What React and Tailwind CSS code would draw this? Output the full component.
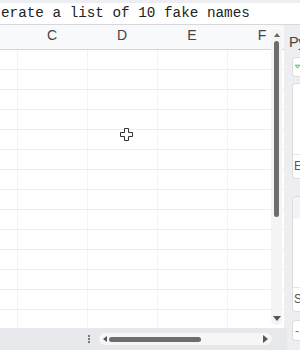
import React from "react";

const rows = Array.from({ length: 14 }, (_, i) => i);
const cols = ["C", "D", "E", "F"];

function Cursor() {
  return (
    <svg className="absolute left-[120px] top-[128px]" width="13" height="13" viewBox="0 0 13 13">
      <path
        d="M4.5 0.5h4v4h4v4h-4v4h-4v-4h-4v-4h4z"
        fill="#fff"
        stroke="#333"
        strokeWidth="1"
      />
    </svg>
  );
}

export default function App() {
  return (
    <div className="relative h-[350px] w-[300px] overflow-hidden bg-[#eceef1] font-['Liberation_Sans',Arial,sans-serif]">
      <div className="h-[3px] bg-[#eceef1]" />
      <div className="flex h-[22px] items-center border-b border-[#d6d8db] bg-white pl-[1px] font-['Liberation_Mono',monospace] text-[14.3px] leading-none text-[#222]">
        erate a list of 10 fake names
      </div>

      <div className="flex">
        <div className="relative h-[303px] w-[284px] shrink-0 overflow-hidden">
          <div className="flex h-[25px] items-end border-b border-[#d4d4d4] bg-[#f8f9fa] pb-[3px] text-[14px] text-[#444]">
            <div className="w-[17px] shrink-0" />
            {cols.map((c) => (
              <div key={c} className="w-[70px] shrink-0 text-center">
                {c}
              </div>
            ))}
          </div>
          <div className="bg-white">
            {rows.map((r) => (
              <div key={r} className="flex h-[20px] border-b border-[#ececec]">
                <div className="w-[17px] shrink-0" />
                {cols.map((c) => (
                  <div key={c} className="w-[70px] shrink-0 border-l border-[#f3f3f3]" />
                ))}
              </div>
            ))}
          </div>

          <div className="absolute right-[2px] top-[4px] flex h-[296px] w-[11px] flex-col items-center rounded-[5px] bg-[#f4f4f4] py-[4px]">
            <div className="h-0 w-0 border-x-[3px] border-b-[4px] border-x-transparent border-b-[#666]" />
            <div className="mt-[4px] h-[176px] w-[5px] rounded-full bg-[#6d6d6d]" />
            <div className="flex-1" />
            <div className="h-0 w-0 border-x-[4px] border-t-[5px] border-x-transparent border-t-[#555]" />
          </div>
        </div>

        <div className="ml-[3px] min-w-0 flex-1 overflow-hidden">
          <div className="pl-[2px] pt-[10px] text-[14.5px] leading-none tracking-[-0.5px] text-[#444] whitespace-nowrap">Py</div>
          <div className="ml-[5px] mt-[7px] flex h-[20px] items-center rounded-l-[4px] border border-r-0 border-[#dcdcdc] bg-white pl-[2px]">
            <svg width="7" height="6" viewBox="0 0 7 6">
              <path d="M0.5 0.5h6l-3 4z" fill="none" stroke="#3aa757" strokeWidth="1.2" />
            </svg>
          </div>
          <div className="ml-[5px] mt-[6px] flex h-[96px] flex-col rounded-l-[4px] border border-r-0 border-[#dcdcdc] bg-white">
            <div className="flex-1 border-b border-[#e6e6e6]" />
            <div className="h-[23px] pl-[1px] pt-[5px] text-[12px] leading-none text-[#555]">E</div>
          </div>
          <div className="ml-[5px] mt-[17px] flex h-[116px] flex-col overflow-hidden rounded-l-[4px] border border-r-0 border-[#dcdcdc] bg-white">
            <div className="h-[22px] bg-[#f3f4f6]" />
            <div className="flex-1 border-b border-[#e6e6e6]" />
            <div className="h-[23px] pl-[1px] pt-[5px] text-[12px] leading-none text-[#555]">S</div>
          </div>
        </div>
      </div>

      <div className="flex h-[22px] w-[287px] items-center bg-[#e6e8eb]">
        <div className="ml-[88px] flex flex-col gap-[1px]">
          <div className="h-[2px] w-[2px] bg-[#777]" />
          <div className="h-[2px] w-[2px] bg-[#777]" />
          <div className="h-[2px] w-[2px] bg-[#777]" />
        </div>
        <div className="ml-[9px] flex h-[12px] w-[173px] items-center rounded-[6px] bg-[#f6f6f6] px-[4px]">
          <div className="h-0 w-0 border-y-[3px] border-r-[4px] border-y-transparent border-r-[#555]" />
          <div className="ml-[2px] h-[5px] w-[92px] rounded-full bg-[#6d6d6d]" />
          <div className="flex-1" />
          <div className="h-0 w-0 border-y-[4px] border-l-[5px] border-y-transparent border-l-[#555]" />
        </div>
      </div>

      <div className="absolute left-[292px] top-[320px] flex h-[21px] w-[10px] items-center rounded-l-[4px] border border-r-0 border-[#dcdcdc] bg-white pl-[2px] text-[12px] text-[#777]">
        -
      </div>

      <Cursor />
    </div>
  );
}
